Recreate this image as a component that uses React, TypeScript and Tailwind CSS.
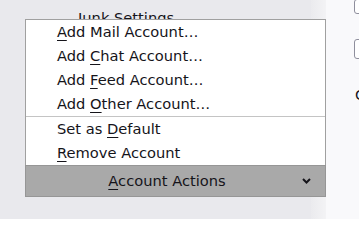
import React from 'react'

const font = { fontFamily: '"DejaVu Sans", Verdana, sans-serif' }

type Item = { pre: string; key: string; post: string }

const addItems: Item[] = [
  { pre: '', key: 'A', post: 'dd Mail Account…' },
  { pre: 'Add ', key: 'C', post: 'hat Account…' },
  { pre: 'Add ', key: 'F', post: 'eed Account…' },
  { pre: 'Add ', key: 'O', post: 'ther Account…' },
]

const otherItems: Item[] = [
  { pre: 'Set as ', key: 'D', post: 'efault' },
  { pre: '', key: 'R', post: 'emove Account' },
]

function Label({ item }: { item: Item }) {
  return (
    <span>
      {item.pre}
      <span className="underline underline-offset-[3px] decoration-1">{item.key}</span>
      {item.post}
    </span>
  )
}

function MenuRow({ item }: { item: Item }) {
  return (
    <div className="h-6 leading-6 pl-[31px] text-[#15141a] whitespace-nowrap">
      <Label item={item} />
    </div>
  )
}

export default function App() {
  return (
    <div className="relative w-[359px] h-[219px] overflow-hidden text-[14.67px]" style={font}>
      <div className="flex h-full">
        {/* account list pane */}
        <div className="w-[311px] shrink-0 h-full bg-[#e9e9ed] pt-[9px] pl-[78px]">
          <div className="leading-[17px] text-[#15141a] whitespace-nowrap">Junk Settings</div>
        </div>
        <div className="w-[15px] shrink-0 h-full bg-gradient-to-r from-[#ebebee] to-[#f3f3f5]" />
        {/* settings pane */}
        <div className="w-[33px] shrink-0 h-full overflow-hidden bg-[#f9f9fb] pl-[28px]">
          <div className="h-[15px] -mt-[1px] w-[100px] bg-white border border-[#8f8f9d] rounded-[3px]" />
          <div className="h-[20px] mt-[25px] w-[100px] bg-white border border-[#8f8f9d] rounded-[3px]" />
          <div className="mt-[27px] pl-[1px] leading-[17px] text-[#15141a] whitespace-nowrap">Copies</div>
        </div>
      </div>

      {/* open Account Actions popup */}
      <div className="absolute left-[25px] top-[19px] w-[301px]">
        <div className="bg-white border-x border-t border-[#a0a0a0]">
          {addItems.map((it) => (
            <MenuRow key={it.key} item={it} />
          ))}
          <div className="h-px bg-[#c4c4c4]" />
          {otherItems.map((it) => (
            <MenuRow key={it.key} item={it} />
          ))}
        </div>
        <div className="h-[32px] bg-[#a9a9a9] border border-[#969696] flex items-center text-[#15141a] whitespace-nowrap">
          <div className="flex-1 text-center pl-[6px]">
            <Label item={{ pre: '', key: 'A', post: 'ccount Actions' }} />
          </div>
          <svg width="9" height="6" viewBox="0 0 9 6" className="mr-[14px]">
            <path d="M1 1 L4.5 4.5 L8 1" fill="none" stroke="#15141a" strokeWidth="2" />
          </svg>
        </div>
      </div>
    </div>
  )
}
